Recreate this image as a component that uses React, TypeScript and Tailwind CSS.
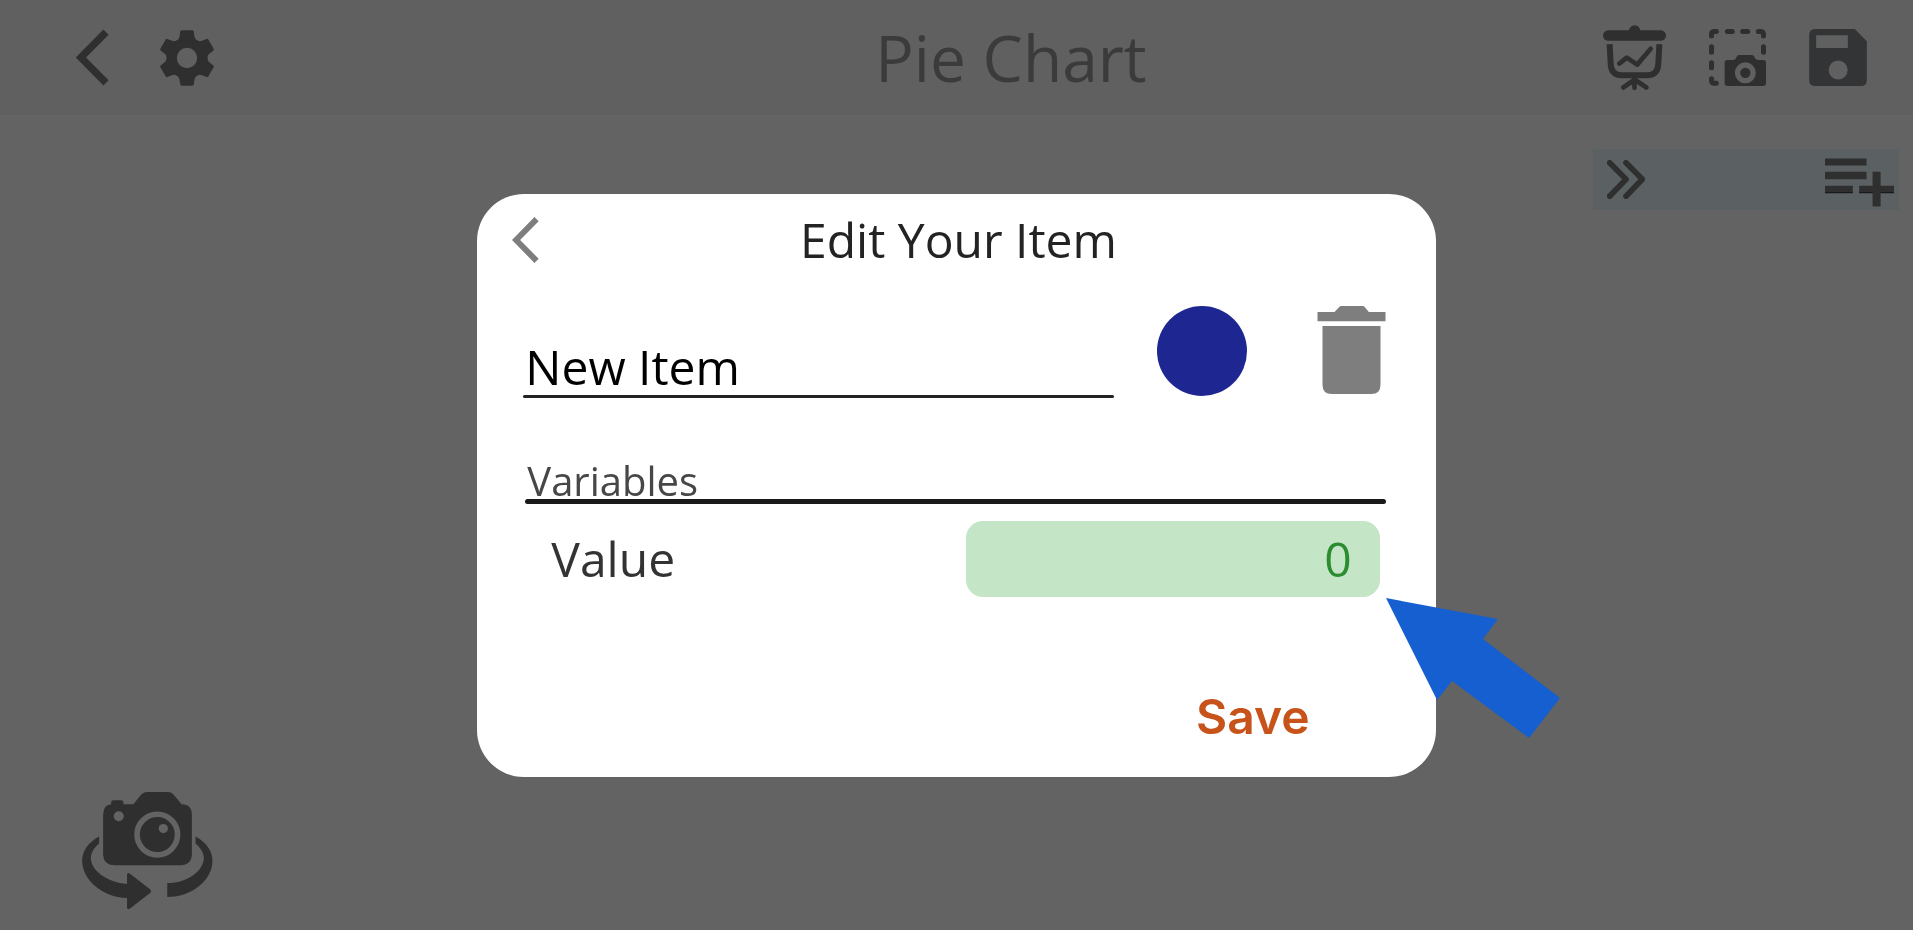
import { useState } from "react";

const TOOTH_ANGLES = [0, 60, 120, 180, 240, 300];

function BackIcon({ className }: { className: string }) {
  return (
    <svg viewBox="0 0 100 170" className={className} fill="none" aria-hidden="true">
      <path d="M91 8 15 85l76 77" stroke="currentColor" strokeWidth="22" strokeLinejoin="miter" />
    </svg>
  );
}

function GearIcon() {
  return (
    <svg viewBox="-84 -84 168 168" className="size-14" fill="currentColor" aria-hidden="true">
      <circle r="46" fill="none" stroke="currentColor" strokeWidth="31" />
      {TOOTH_ANGLES.map((angle) => (
        <path key={angle} transform={`rotate(${angle})`} d="M-33 -50Q-25 -54 -23 -62L-20 -80Q-19 -83 -16 -83H16Q19 -83 20 -80L23 -62Q25 -54 33 -50Z" />
      ))}
    </svg>
  );
}

function PresentationIcon() {
  return (
    <svg viewBox="66 44 190 198" className="h-[66px] w-[63px]" fill="none" stroke="currentColor" aria-hidden="true">
      <rect x="66" y="59" width="190" height="32" rx="16" fill="currentColor" stroke="none" />
      <path d="M144 62a17.500 18 0 0 1 35 0z" fill="currentColor" stroke="none" />
      <path d="M86 101 89 158Q90 195 122 195H200Q232 195 233 158L236 101" strokeWidth="18" />
      <path d="M115 160 138 142 169 163 210 115" strokeWidth="14" strokeLinecap="round" strokeLinejoin="round" />
      <path d="M161 204V233M161 208 127 232M161 208 197 232" strokeWidth="14" strokeLinecap="round" />
    </svg>
  );
}

function CaptureIcon() {
  return (
    <svg viewBox="390 57 171 171" className="size-[57px]" fill="none" stroke="currentColor" aria-hidden="true">
      <path
        d="M397.500 78V72Q398 64.500 406 64.500H412M445 64.500H460M491 64.500H506M538 64.500H544Q553 64.500 553.500 73V78M397.500 110V127M397.500 158V173M397.500 206V212Q398 220 406 220H412M553.500 110V127"
        strokeWidth="15"
        strokeLinecap="round"
      />
      <path
        fillRule="evenodd"
        fill="currentColor"
        stroke="none"
        d="M445 150H463Q471 149 473 140Q475 135 480 135H519Q524 135 526 140Q529 149 537 150H553Q561 150 561 158V220Q561 228 553 228H445Q437 228 437 220V158Q437 150 445 150ZM499 157a31.500 31.500 0 1 0 0 63a31.500 31.500 0 1 0 0-63ZM499 173a15.500 15.500 0 1 1 0 31a15.500 15.500 0 1 1 0-31Z"
      />
    </svg>
  );
}

function DiskIcon() {
  return (
    <svg viewBox="687 57 173 171" className="h-[57px] w-[58px] text-[#333436]" aria-hidden="true">
      <path
        fill="currentColor"
        fillRule="evenodd"
        d="M705 57H824L860 94V210Q860 228 842 228H705Q687 228 687 210V75Q687 57 705 57ZM708 76V114H803V76ZM774 151.500a28.500 28.500 0 1 0 0 57a28.500 28.500 0 1 0 0-57Z"
      />
    </svg>
  );
}

function ExpandIcon() {
  return (
    <svg viewBox="82 77 114 116" className="h-[39px] w-[38px]" fill="none" aria-hidden="true">
      <path
        d="M90 85 139 134 90 185M139 85 188 134 139 185"
        stroke="currentColor"
        strokeWidth="17"
        strokeLinecap="round"
        strokeLinejoin="round"
      />
    </svg>
  );
}

function AddRowIcon() {
  return (
    <svg viewBox="737 69 206 146" className="h-[49px] w-[69px]" aria-hidden="true">
      <path
        fill="currentColor"
        d="M737 70H861V91H737ZM737 110H861V132H737ZM737 152H820V173H737ZM879 110H903V152H943V173H903V214H879V173H839V152H879Z"
      />
      <path fill="#151515" d="M737 171H820V174H737ZM839 171H879V174H839ZM903 171H943V174H903Z" />
    </svg>
  );
}

function RotateCameraIcon() {
  return (
    <svg viewBox="66 62 393 358" className="h-[119px] w-[131px]" aria-hidden="true">
      <path
        fill="currentColor"
        d="M153 102V96Q153 90 160 90H183Q190 90 190 96V102H220L243 73Q250 65 260 65H324Q334 65 340 72L365 102Q396 102 396 134V250Q396 285 361 285H164Q129 285 129 250V134Q129 104 153 102Z"
      />
      <circle cx="176" cy="138" r="15" fill="#636363" />
      <circle cx="292" cy="193" r="61" fill="none" stroke="#636363" strokeWidth="17" />
      <circle cx="310" cy="175" r="14" fill="#636363" />
      <path
        fill="currentColor"
        d="M117 199V220C101 234 92 249 92 265C94 302 140 336 201 342V313Q202 306 209 310L271 358Q276 363 271 368L209 416Q202 420 201 413V384C125 382 66 328 66 272C66 243 84 217 117 199Z"
      />
      <path
        fill="currentColor"
        d="M407 199C440 217 458 243 458 272C458 328 399 381 322 381V339C384 339 430 302 432 265C432 249 423 234 407 220Z"
      />
    </svg>
  );
}

function TrashIcon() {
  return (
    <svg viewBox="653 72 206 264" className="h-[88px] w-[69px]" aria-hidden="true">
      <path
        fill="currentColor"
        d="M654 90H705L720 74Q722 72 725 72H790Q793 72 795 74L808 90H858V118H654ZM669 132H843V308Q843 336 815 336H697Q669 336 669 308Z"
      />
    </svg>
  );
}

function PointerArrow() {
  return (
    <svg
      viewBox="0 0 174 140"
      className="pointer-events-none absolute top-[404px] left-[calc(100%-50px)] h-[140px] w-[174px]"
      aria-hidden="true"
    >
      <path fill="#155fd0" d="M0 0 112 21 97 41 174 100 143 140 66 83 51 102Z" />
    </svg>
  );
}

export default function App() {
  const [name, setName] = useState("New Item");
  const [value, setValue] = useState("0");

  return (
    <div className="flex min-h-screen flex-col bg-[#636363] font-['Open_Sans',sans-serif] text-[#2f2f2f]">
      <header className="flex h-[116px] items-center border-b border-[#676465] bg-[#606060] pr-[46px] pl-[76px]">
        <div className="flex items-center gap-[50px]">
          <button type="button" aria-label="Back">
            <BackIcon className="h-[57px] w-[33px]" />
          </button>
          <button type="button" aria-label="Settings">
            <GearIcon />
          </button>
        </div>
        <h1 className="flex-1 pl-51 text-center text-[64px] leading-none text-[#3b3b3b]">Pie Chart</h1>
        <div className="flex items-center gap-[43px]">
          <button type="button" aria-label="Present">
            <PresentationIcon />
          </button>
          <button type="button" aria-label="Capture area">
            <CaptureIcon />
          </button>
          <button type="button" aria-label="Save chart">
            <DiskIcon />
          </button>
        </div>
      </header>

      <main className="flex flex-1 flex-col justify-between">
        <section className="mt-[33px] mr-[14px] flex h-[61px] w-[306px] items-center justify-between self-end bg-[#5b6163] pr-[5px] pl-[14px]">
          <button type="button" aria-label="Collapse list">
            <ExpandIcon />
          </button>
          <button type="button" aria-label="Add item" className="mt-[6px]">
            <AddRowIcon />
          </button>
        </section>
        <button type="button" aria-label="Rotate camera" className="mb-5 ml-[82px] self-start">
          <RotateCameraIcon />
        </button>
      </main>

      <div className="fixed inset-0 flex items-center justify-center pt-10">
        <form
          role="dialog"
          aria-labelledby="dialog-title"
          onSubmit={(event) => event.preventDefault()}
          className="relative flex w-[50.1%] flex-col rounded-[47px] bg-white pr-[50px] pb-[30px] pl-12"
        >
          <div className="flex h-[92px] items-center">
            <button type="button" aria-label="Close" className="-ml-[13px] text-[#7e7e7e]">
              <BackIcon className="h-[46px] w-[27px]" />
            </button>
            <h2 id="dialog-title" className="flex-1 pr-2 text-center text-[48px] leading-none font-medium text-[#232323]">
              Edit Your Item
            </h2>
          </div>

          <div className="mt-5 flex h-[92px] items-start">
            <div className="-ml-[2px] flex min-w-0 flex-1 flex-col self-end">
              <input
                aria-label="Item name"
                value={name}
                onChange={(event) => setName(event.target.value)}
                className="h-14 w-full bg-transparent pl-[2px] text-[48px] leading-[56px] font-medium text-black outline-none"
              />
              <div className="h-[3px] rounded-full bg-[#232323]" />
            </div>
            <button type="button" aria-label="Item color" className="ml-[43px] size-[90px] rounded-full bg-[#1e2791]" />
            <button type="button" aria-label="Delete item" className="ml-[70px] text-[#7e7e7e]">
              <TrashIcon />
            </button>
          </div>

          <h3 className="mt-[55px] h-[46px] pl-[2px] text-[40px] leading-[56px] text-[#474747]">Variables</h3>
          <div className="h-[5px] rounded-full bg-[#1b1a1b]" />

          <div className="mt-[17px] flex h-[76px] items-center pr-[6px] pl-[26px]">
            <label htmlFor="item-value" className="flex-1 text-[48px] leading-none text-[#333333]">
              Value
            </label>
            <input
              id="item-value"
              inputMode="decimal"
              value={value}
              onChange={(event) => setValue(event.target.value)}
              className="h-full w-[414px] rounded-[17px] bg-[#c4e5c6] px-7 text-right text-[48px] font-medium text-[#2b8c30] outline-none"
            />
          </div>

          <button
            type="submit"
            className="mt-[90px] mr-[76px] h-[60px] self-end font-['Inter',sans-serif] text-[48px] leading-none font-semibold text-[#c8531a]"
          >
            Save
          </button>

          <PointerArrow />
        </form>
      </div>
    </div>
  );
}
